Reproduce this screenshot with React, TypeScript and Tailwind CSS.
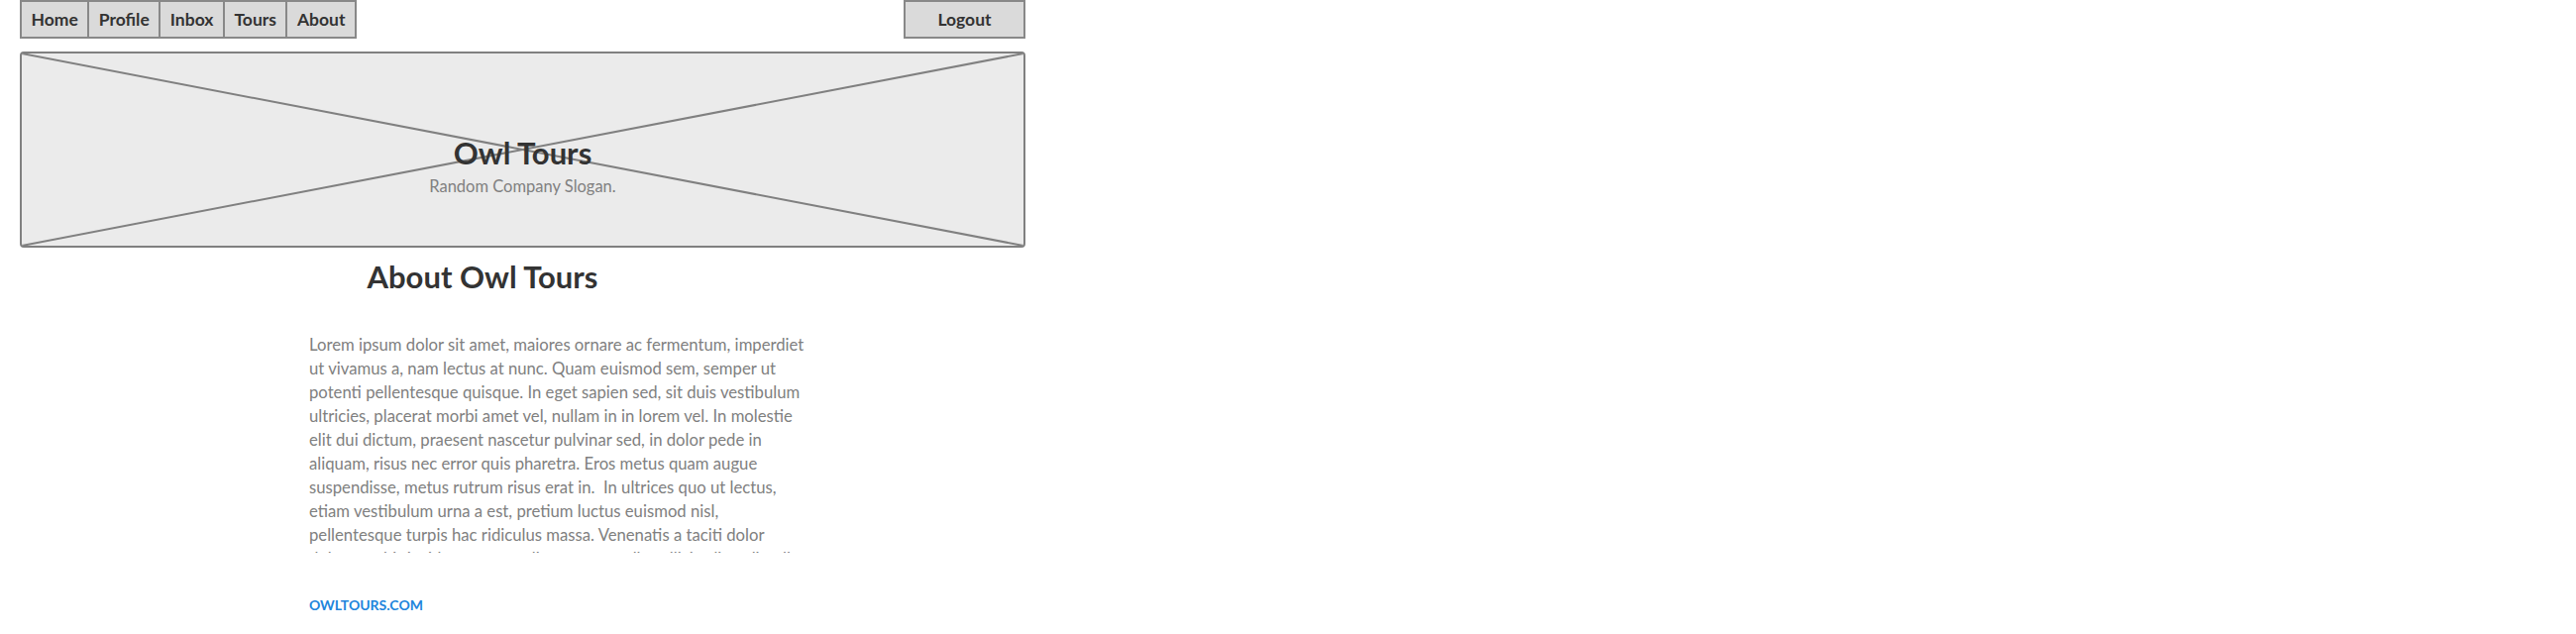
import React from 'react';

const navItems = ['Home', 'Profile', 'Inbox', 'Tours', 'About'];

const lines = [
  'Lorem ipsum dolor sit amet, maiores ornare ac fermentum, imperdiet',
  'ut vivamus a, nam lectus at nunc. Quam euismod sem, semper ut',
  'potenti pellentesque quisque. In eget sapien sed, sit duis vestibulum',
  'ultricies, placerat morbi amet vel, nullam in in lorem vel. In molestie',
  'elit dui dictum, praesent nascetur pulvinar sed, in dolor pede in',
  'aliquam, risus nec error quis pharetra. Eros metus quam augue',
  'suspendisse, metus rutrum risus erat in.  In ultrices quo ut lectus,',
  'etiam vestibulum urna a est, pretium luctus euismod nisl,',
  'pellentesque turpis hac ridiculus massa. Venenatis a taciti dolor',
  'dolor, morbi tincidunt aenean dictum, nec nulla sollicitudin velit, ullamcorper',
];

function Banner() {
  return (
    <div className="relative h-[198px] w-full rounded-[4px] border-2 border-[#808080] bg-[#ebebeb] overflow-hidden">
      <svg className="absolute inset-0 h-full w-full" viewBox="0 0 100 100" preserveAspectRatio="none">
        <line x1="0" y1="0" x2="100" y2="100" stroke="#808080" strokeWidth="2" vectorEffect="non-scaling-stroke" />
        <line x1="100" y1="0" x2="0" y2="100" stroke="#808080" strokeWidth="2" vectorEffect="non-scaling-stroke" />
      </svg>
      <div className="relative flex h-full flex-col items-center pt-[82px]">
        <h1 className="text-[31px] font-bold leading-[36px] text-[#333333]">Owl Tours</h1>
        <p className="mt-[6px] text-[16.5px] leading-[20px] text-[#808080]">Random Company Slogan.</p>
      </div>
    </div>
  );
}

export default function App() {
  return (
    <div className="min-h-[640px] bg-white" style={{ fontFamily: 'Lato, "Open Sans", sans-serif' }}>
      <div className="ml-[20px] w-[1015px]">
        <div className="flex items-start justify-between">
          <nav className="flex h-[39px] border-2 border-[#888888] bg-[#dadada]">
            {navItems.map((item, i) => (
              <a
                key={item}
                href="#"
                className={`flex items-center px-[9.5px] pt-[2px] text-[17.5px] font-bold text-[#333333] ${i > 0 ? 'border-l-2 border-[#888888]' : ''}`}
              >
                {item}
              </a>
            ))}
          </nav>
          <button className="flex h-[39px] w-[123px] items-center justify-center border-2 border-[#888888] bg-[#dadada] pt-[2px] text-[17.5px] font-bold text-[#333333]">
            Logout
          </button>
        </div>
        <div className="mt-[13px]">
          <Banner />
        </div>
      </div>

      <div className="ml-[312px]">
        <h2 className="mt-[9px] w-[350px] text-center text-[31px] font-bold leading-[40px] text-[#333333]">
          About Owl Tours
        </h2>
        <div className="mt-[37px] h-[222px] w-[540px] overflow-hidden text-[16.7px] leading-[24px] text-[#808080]">
          {lines.map((line, i) => (
            <div key={i} className="whitespace-pre">{line}</div>
          ))}
        </div>
        <a href="#" className="mt-[44px] block text-[14px] font-bold leading-[18px] text-[#2185dc]">
          OWLTOURS.COM
        </a>
      </div>
    </div>
  );
}
